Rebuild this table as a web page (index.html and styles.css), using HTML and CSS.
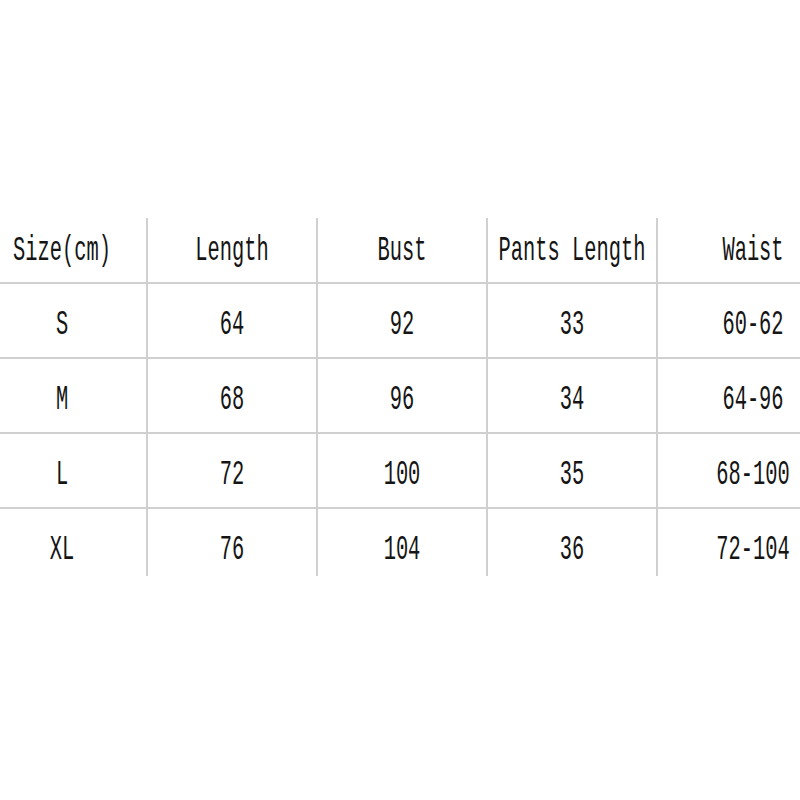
FILE: index.html
```html
<!DOCTYPE html>
<html>
<head>
<meta charset="utf-8">
<link rel="stylesheet" href="styles.css">
</head>
<body>
<div class="page">
  <div class="table">
    <div class="cell head"><span class="t">Size(cm)</span></div>
    <div class="cell head"><span class="t">Length</span></div>
    <div class="cell head"><span class="t">Bust</span></div>
    <div class="cell head"><span class="t">Pants Length</span></div>
    <div class="cell head last"><span class="t">Waist</span></div>

    <div class="cell"><span class="t">S</span></div>
    <div class="cell"><span class="t">64</span></div>
    <div class="cell"><span class="t">92</span></div>
    <div class="cell"><span class="t">33</span></div>
    <div class="cell last"><span class="t">60-62</span></div>

    <div class="cell"><span class="t">M</span></div>
    <div class="cell"><span class="t">68</span></div>
    <div class="cell"><span class="t">96</span></div>
    <div class="cell"><span class="t">34</span></div>
    <div class="cell last"><span class="t">64-96</span></div>

    <div class="cell"><span class="t">L</span></div>
    <div class="cell"><span class="t">72</span></div>
    <div class="cell"><span class="t">100</span></div>
    <div class="cell"><span class="t">35</span></div>
    <div class="cell last"><span class="t">68-100</span></div>

    <div class="cell end"><span class="t">XL</span></div>
    <div class="cell end"><span class="t">76</span></div>
    <div class="cell end"><span class="t">104</span></div>
    <div class="cell end"><span class="t">36</span></div>
    <div class="cell end last"><span class="t">72-104</span></div>
  </div>
</div>
</body>
</html>
```
FILE: styles.css
```css
html, body {
  margin: 0;
  padding: 0;
  background: #ffffff;
  overflow: hidden;
}

.page {
  width: 800px;
  height: 800px;
  overflow: hidden;
  padding-top: 218px;
  box-sizing: border-box;
}

.table {
  display: grid;
  grid-template-columns: 170px 170px 170px 170px 190px;
  grid-template-rows: 66px 75px 75px 75px 67px;
  margin-left: -22px;
  width: 870px;
  font-family: "Liberation Mono", "Courier New", monospace;
  font-size: 20.4px;
  color: #151515;
}

.cell {
  display: flex;
  align-items: center;
  justify-content: center;
  border-right: 2px solid #d0d0d0;
  border-bottom: 2px solid #d0d0d0;
  box-sizing: border-box;
  padding-top: 9px;
}

.cell.head {
  padding-top: 2px;
}

.cell.last {
  border-right: none;
}

.cell.end {
  border-bottom: none;
  padding-top: 16px;
}

.t {
  display: inline-block;
  white-space: pre;
  transform: scaleY(1.75);
  line-height: 1;
}
```
